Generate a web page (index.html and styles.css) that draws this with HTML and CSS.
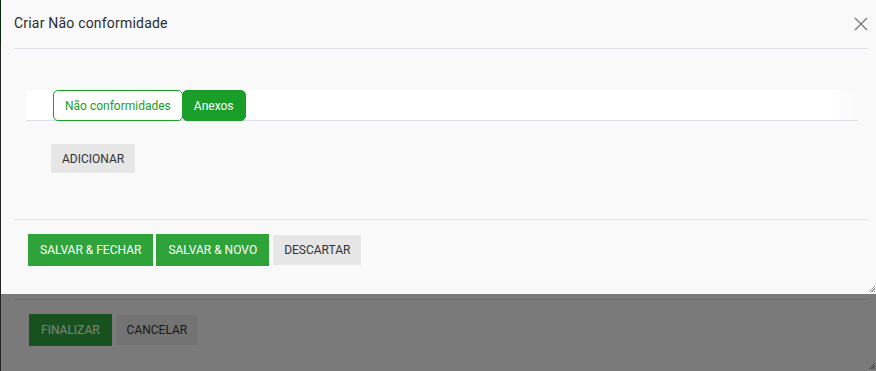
FILE: index.html
```html
<!DOCTYPE html>
<html lang="pt">
<head>
  <meta charset="UTF-8">
  <meta name="viewport" content="width=device-width, initial-scale=1.0">
  <title>Criar Não conformidade</title>
  <link rel="stylesheet" href="styles.css">
</head>
<body>

  <div class="page">
    <div class="page-edge"></div>
    <div class="page-main">
      <div class="page-body"></div>
      <div class="page-actions">
        <button class="btn btn-green">FINALIZAR</button>
        <button class="btn btn-gray">CANCELAR</button>
      </div>
    </div>
    <span class="grip"></span>
  </div>

  <div class="backdrop"></div>

  <div class="dialog">
    <div class="dialog-header">
      <h1 class="dialog-title">Criar Não conformidade</h1>
      <button class="close" aria-label="Fechar">
        <svg width="14" height="14" viewBox="0 0 14 14">
          <path d="M1 1 L13 13 M13 1 L1 13" stroke="#7a7a7a" stroke-width="1.4" fill="none"/>
        </svg>
      </button>
    </div>

    <div class="dialog-body">
      <div class="tabs">
        <button class="tab">Não conformidades</button>
        <button class="tab active">Anexos</button>
      </div>
      <div class="tab-panel">
        <button class="btn btn-gray">ADICIONAR</button>
      </div>
    </div>

    <div class="dialog-footer">
      <button class="btn btn-green">SALVAR &amp; FECHAR</button>
      <button class="btn btn-green">SALVAR &amp; NOVO</button>
      <button class="btn btn-gray">DESCARTAR</button>
    </div>
    <span class="grip"></span>
  </div>

</body>
</html>
```

FILE: styles.css
```css
body {
  margin: 0;
  height: 371px;
  overflow: hidden;
  background-color: #f5f5f5;
  font-family: Roboto, "Noto Sans", sans-serif;
  color: #333;
}

button {
  font-family: inherit;
  cursor: pointer;
}

/* page behind the modal */
.page {
  position: relative;
  display: flex;
  height: 371px;
}

.page-edge {
  width: 1px;
  background: linear-gradient(to bottom, #154f15 0, #154f15 43px, #444 43px);
}

.page-main {
  flex: 1;
  padding: 0 0 0 13px;
}

.page-body {
  height: 299px;
}

.page-actions {
  border-top: 1px solid #d6d6d6;
  margin-right: 8px;
  padding: 14px 0 0 15px;
  display: flex;
  gap: 3px;
}

.backdrop {
  position: fixed;
  inset: 0;
  background-color: rgba(0, 0, 0, 0.5);
}

/* modal */
.dialog {
  position: absolute;
  top: 0;
  left: 1px;
  right: 0;
  height: 294px;
  background-color: #f9f9f9;
  display: flex;
  flex-direction: column;
}

.dialog-header {
  height: 48px;
  margin: 0 8px 0 13px;
  border-bottom: 1px solid #dfe2e9;
  display: flex;
  align-items: center;
  justify-content: space-between;
}

.dialog-title {
  margin: 0 0 3px 0;
  font-size: 14px;
  font-weight: 400;
  letter-spacing: 0.2px;
  color: #2a2c2e;
}

.close {
  border: none;
  background: none;
  padding: 0;
  width: 14px;
  height: 14px;
  display: flex;
}

.dialog-body {
  height: 129px;
  margin: 0 8px 0 13px;
  padding: 41px 10px 0 12px;
  border-bottom: 1px solid #e2e2e2;
}

.tabs {
  display: flex;
  height: 30px;
  padding-left: 27px;
  background: linear-gradient(to right, #fff 0, #fff 97%, #f9f9f9 100%);
  border-bottom: 1px solid #dcdfe6;
}

.tab {
  height: 31px;
  padding: 0 11px;
  font-size: 12px;
  border: 1px solid #1a9e2a;
  border-radius: 5px;
  background-color: #fff;
  color: #1a9e2a;
}

.tab.active {
  margin-left: -1px;
  background-color: #1a9e2a;
  color: #fff;
}

.tab-panel {
  padding: 22px 0 0 24px;
}

.btn {
  height: 32px;
  padding: 0 12px;
  font-size: 12px;
  border: none;
  border-radius: 0;
}

.btn-green {
  background-color: #2ea33a;
  color: #fff;
}

.btn-gray {
  padding: 0 11px;
  background-color: #e6e6e6;
  color: #333;
  border: 1px solid #fafafa;
}

.tab-panel .btn-gray {
  height: 31px;
}

.dialog-footer {
  display: flex;
  gap: 3px;
  padding: 14px 0 0 27px;
}

.grip {
  position: absolute;
  right: 1px;
  bottom: 2px;
  width: 7px;
  height: 7px;
  background: repeating-linear-gradient(135deg, transparent 0, transparent 1px, #999 1px, #999 2px);
  clip-path: polygon(100% 0, 100% 100%, 0 100%);
}
```
